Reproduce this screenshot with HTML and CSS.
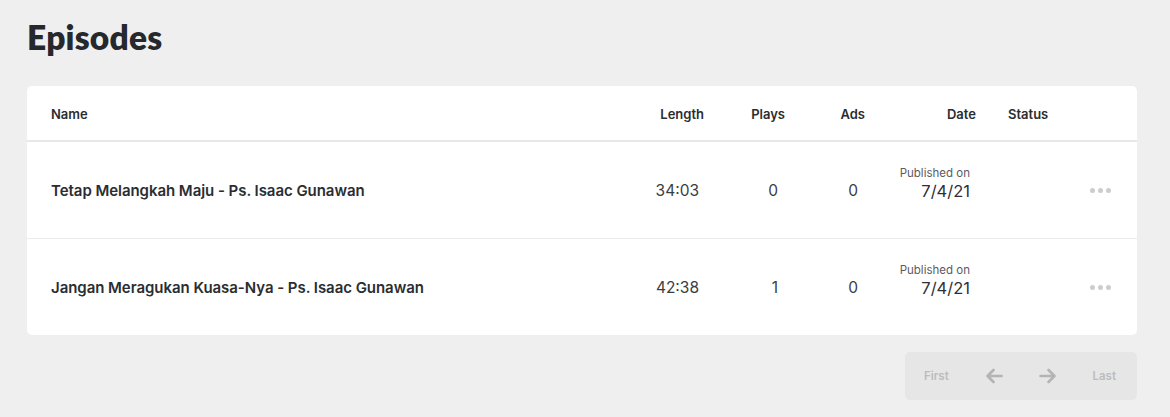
FILE: index.html
```html
<!DOCTYPE html>
<html>
<head>
<meta charset="utf-8">
<link rel="stylesheet" href="styles.css">
</head>
<body>
<div class="page">
  <h1 class="title">Episodes</h1>
  <div class="card">
    <div class="row head">
      <div class="c-name">Name</div>
      <div class="c-len">Length</div>
      <div class="c-plays">Plays</div>
      <div class="c-ads">Ads</div>
      <div class="c-date">Date</div>
      <div class="c-status">Status</div>
      <div class="c-act"></div>
    </div>
    <div class="row item">
      <div class="c-name">Tetap Melangkah Maju - Ps. Isaac Gunawan</div>
      <div class="c-len">34:03</div>
      <div class="c-plays">0</div>
      <div class="c-ads">0</div>
      <div class="c-date"><span class="pub">Published on</span><span class="d">7/4/21</span></div>
      <div class="c-status"></div>
      <div class="c-act"><span class="dots"><i></i><i></i><i></i></span></div>
    </div>
    <div class="row item">
      <div class="c-name">Jangan Meragukan Kuasa-Nya - Ps. Isaac Gunawan</div>
      <div class="c-len">42:38</div>
      <div class="c-plays">1</div>
      <div class="c-ads">0</div>
      <div class="c-date"><span class="pub">Published on</span><span class="d">7/4/21</span></div>
      <div class="c-status"></div>
      <div class="c-act"><span class="dots"><i></i><i></i><i></i></span></div>
    </div>
  </div>
  <div class="pager-wrap">
    <div class="pager">
      <span class="pg-text">First</span>
      <svg class="arrow" width="18" height="16" viewBox="0 0 18 16"><path d="M16.5 8H2.5M8.5 2L2.5 8L8.5 14" fill="none" stroke="#b4b4b4" stroke-width="2.6" stroke-linecap="round" stroke-linejoin="round"/></svg>
      <svg class="arrow" width="18" height="16" viewBox="0 0 18 16"><path d="M1.5 8H15.5M9.5 2L15.5 8L9.5 14" fill="none" stroke="#b4b4b4" stroke-width="2.6" stroke-linecap="round" stroke-linejoin="round"/></svg>
      <span class="pg-text">Last</span>
    </div>
  </div>
</div>
</body>
</html>
```

FILE: styles.css
```css
html, body {
  margin: 0;
  padding: 0;
  background: #efefef;
}
body {
  font-family: Inter, "Noto Sans", sans-serif;
  color: #2a2d31;
}
.page {
  padding: 17px 33px 0 27px;
}
.title {
  margin: 0 0 29px 0;
  font-family: Lato, "Noto Sans", sans-serif;
  font-size: 33.5px;
  line-height: 40px;
  font-weight: 800;
  color: #25282c;
  letter-spacing: 0.2px;
}
.card {
  background: #fff;
  border-radius: 5px;
  overflow: hidden;
}
.row {
  display: grid;
  grid-template-columns: 1fr 84px 81px 80px 111px 104px 57px;
  align-items: center;
  padding-left: 24px;
}
.head {
  height: 56px;
  border-bottom: 2px solid #e8e8e8;
  font-size: 13px;
  font-weight: 600;
  color: #2a2d31;
  padding-top: 1px;
  box-sizing: border-box;
}
.item {
  height: 96px;
  font-size: 15.5px;
  box-sizing: border-box;
}
.item + .item {
  height: 97px;
  border-top: 1px solid #ececec;
}
.head .c-len, .head .c-plays, .head .c-ads, .head .c-date {
  text-align: right;
}
.head .c-status {
  padding-left: 32px;
}
.item .c-name {
  font-weight: 600;
  font-size: 15px;
  color: #2a2d31;
  letter-spacing: -0.05px;
}
.item .c-len {
  text-align: right;
  padding-right: 5px;
  color: #3a3d42;
}
.item .c-plays {
  text-align: right;
  padding-right: 7px;
  color: #3a3d42;
}
.item .c-ads {
  text-align: right;
  padding-right: 7px;
  color: #3a3d42;
}
.item .c-date {
  display: flex;
  flex-direction: column;
  align-items: flex-end;
  padding-right: 6px;
  margin-top: -12px;
}
.pub {
  font-size: 11.5px;
  line-height: 14px;
  color: #5d5a5e;
}
.d {
  font-size: 16.5px;
  line-height: 22px;
  color: #2f2f38;
  font-weight: 400;
}
.c-act {
  display: flex;
  align-items: center;
}
.dots {
  display: flex;
  gap: 3px;
  margin-left: 10px;
}
.dots i {
  display: block;
  width: 5px;
  height: 5px;
  border-radius: 50%;
  background: #cdcdcd;
}
.pager-wrap {
  display: flex;
  justify-content: flex-end;
  margin-top: 17px;
}
.pager {
  width: 232px;
  height: 48px;
  background: #e6e6e6;
  border-radius: 5px;
  display: flex;
  align-items: center;
  justify-content: space-between;
  padding: 0 21px 0 19px;
  box-sizing: border-box;
}
.pg-text {
  font-size: 11.5px;
  font-weight: 600;
  color: #bcbcbc;
}
.arrow {
  display: block;
}
```
